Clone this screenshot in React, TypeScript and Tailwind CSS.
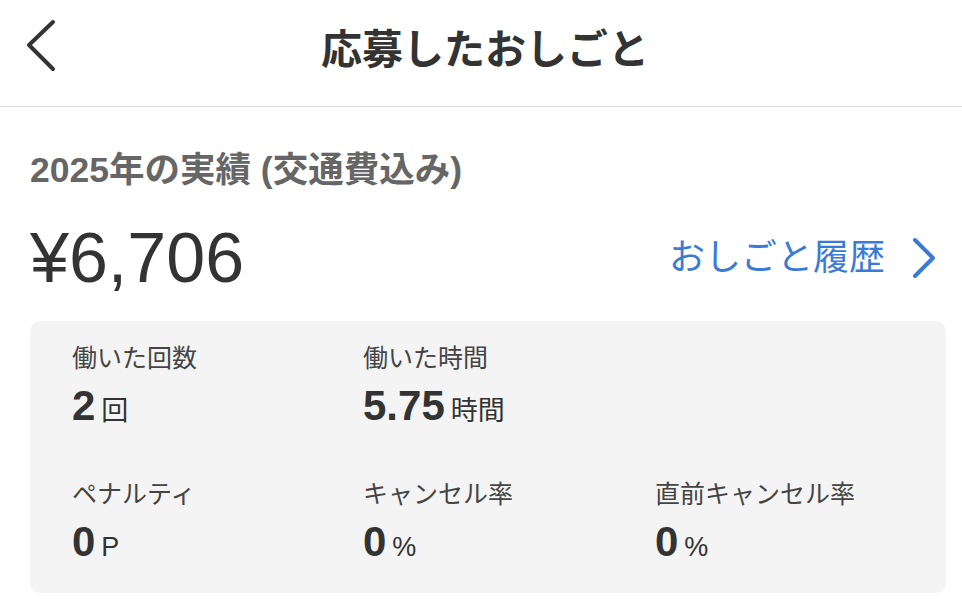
const stats = [
  { label: "働いた回数", value: "2", unit: "回" },
  { label: "働いた時間", value: "5.75", unit: "時間" },
  null,
  { label: "ペナルティ", value: "0", unit: "P" },
  { label: "キャンセル率", value: "0", unit: "%" },
  { label: "直前キャンセル率", value: "0", unit: "%" },
];

const StatItem = ({ label, value, unit }: { label: string; value: string; unit: string }) => (
  <div className="flex flex-col">
    <span className="text-[25px] leading-[36px] text-[#444]">{label}</span>
    <div className="mt-[9px] flex items-baseline gap-[6px] text-[#333]">
      <span className="text-[42px] font-bold leading-[42px]">{value}</span>
      <span className="text-[27px] leading-[42px]">{unit}</span>
    </div>
  </div>
);

export default function App() {
  return (
    <div className="h-[608px] w-[962px] overflow-hidden bg-white font-['Liberation_Sans','Noto_Sans_CJK_JP',sans-serif]">
      <header className="grid h-[107px] grid-cols-[1fr_auto_1fr] items-center border-b border-[#d9d9d9] pb-[6px]">
        <button className="flex items-center pb-[8px] pl-[24px]">
          <svg width="34" height="54" viewBox="0 0 34 54" fill="none">
            <path d="M29 3 L5 26 L29 50" stroke="#333" strokeWidth="4" strokeLinecap="round" strokeLinejoin="round" />
          </svg>
        </button>
        <h1 className="ml-[8px] text-[41px] font-bold leading-[48px] text-[#333]">応募したおしごと</h1>
        <div />
      </header>

      <section className="pl-[30px] pr-[16px] pt-[43px]">
        <h2 className="text-[35.5px] font-bold leading-[40px] text-[#666]">2025年の実績 (交通費込み)</h2>
        <div className="mt-[33px] flex items-center justify-between">
          <span className="text-[70px] leading-[70px] text-[#333]">¥6,706</span>
          <a className="flex items-center gap-[26px] pr-[9px] text-[36px] leading-[42px] text-[#3a7bd5]">
            おしごと履歴
            <svg width="26" height="42" viewBox="0 0 26 42" fill="none">
              <path d="M4 3 L22 21 L4 39" stroke="#3a7bd5" strokeWidth="4" strokeLinecap="round" strokeLinejoin="round" />
            </svg>
          </a>
        </div>

        <div className="mt-[28px] rounded-[10px] bg-[#f4f4f4] pb-[25px] pl-[42px] pt-[19px]">
          <div className="grid grid-cols-[291px_292px_1fr] gap-y-[44px]">
            {stats.map((s, i) => (s ? <StatItem key={i} {...s} /> : <div key={i} />))}
          </div>
        </div>
      </section>
    </div>
  );
}
